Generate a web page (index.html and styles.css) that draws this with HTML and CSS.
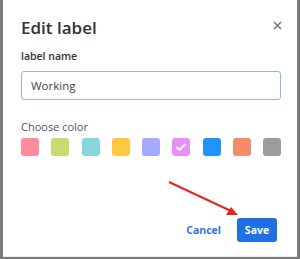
FILE: index.html
```html
<!DOCTYPE html>
<html lang="en">
<head>
    <meta charset="UTF-8">
    <meta name="viewport" content="width=device-width, initial-scale=1.0">
    <title>Edit label</title>
    <link rel="stylesheet" href="styles.css">
</head>
<body>
    <div class="dialog">
        <div class="header">
            <h2 class="title">Edit label</h2>
            <button class="close" aria-label="Close">
                <svg width="9" height="9" viewBox="0 0 9 9">
                    <path d="M1 1 L8 8 M8 1 L1 8" stroke="#777" stroke-width="1.5" fill="none"/>
                </svg>
            </button>
        </div>

        <label class="field-label" for="name">label name</label>
        <input class="field" type="text" id="name" value="Working"/>

        <p class="color-label">Choose color</p>
        <div class="swatches">
            <span class="swatch pink"></span>
            <span class="swatch lime"></span>
            <span class="swatch cyan"></span>
            <span class="swatch yellow"></span>
            <span class="swatch lavender"></span>
            <span class="swatch violet selected">
                <svg width="12" height="10" viewBox="0 0 12 10">
                    <path d="M1.5 5 L4.5 8 L10.5 2" stroke="#fff" stroke-width="1.8" fill="none"/>
                </svg>
            </span>
            <span class="swatch blue"></span>
            <span class="swatch orange"></span>
            <span class="swatch gray"></span>
        </div>

        <div class="actions">
            <button class="btn-cancel">Cancel</button>
            <button class="btn-save">Save</button>
        </div>

        <!-- annotation arrow -->
        <svg class="arrow" width="80" height="40" viewBox="0 0 80 40">
            <line x1="2" y1="2" x2="64" y2="31" stroke="#e8231f" stroke-width="2"/>
            <polygon points="71,35 59,35 64,27" fill="#e8231f"/>
        </svg>
    </div>
</body>
</html>
```

FILE: styles.css
```css
* {
    margin: 0;
    padding: 0;
    box-sizing: border-box;
}
body {
    background-color: #7a7a7a;
    font-family: "Open Sans", "Noto Sans", sans-serif;
    width: 300px;
    height: 259px;
    overflow: hidden;
}
.dialog {
    position: relative;
    background-color: #fff;
    margin: 0 3px;
    height: 257px;
    padding: 15px 16px 0 18px;
    border-bottom: 1px solid #ececec;
}
.header {
    display: flex;
    justify-content: space-between;
    align-items: flex-start;
}
.title {
    font-size: 17px;
    font-weight: 600;
    color: #333;
    line-height: 26px;
}
.close {
    border: none;
    background: none;
    margin-top: 3px;
    margin-right: -1px;
    cursor: pointer;
}
.field-label {
    display: block;
    margin-top: 7px;
    font-size: 10.5px;
    font-weight: 600;
    color: #333;
    line-height: 16px;
}
.field {
    display: block;
    width: 260px;
    height: 29px;
    margin-top: 7px;
    border: 1.5px solid #8db4f5;
    border-radius: 3px;
    padding: 0 9px;
    font-family: inherit;
    font-size: 11.5px;
    color: #444;
    outline: none;
}
.color-label {
    margin-top: 19px;
    font-size: 11px;
    color: #555;
    line-height: 16px;
}
.swatches {
    display: flex;
    justify-content: space-between;
    width: 260px;
    margin-top: 3px;
}
.swatch {
    display: flex;
    justify-content: center;
    align-items: center;
    width: 18px;
    height: 18px;
    border-radius: 3px;
}
.pink { background-color: #ff8b9c; }
.lime { background-color: #c6dc6c; }
.cyan { background-color: #88d5dd; }
.yellow { background-color: #ffc83f; }
.lavender { background-color: #a6aafa; }
.violet { background-color: #e790f8; }
.blue { background-color: #1f93ff; }
.orange { background-color: #f38c6b; }
.gray { background-color: #9c9c9c; }

.actions {
    display: flex;
    justify-content: flex-end;
    align-items: center;
    gap: 16px;
    margin-top: 62px;
    padding-right: 4px;
}
.btn-cancel {
    border: none;
    background: none;
    font-family: inherit;
    font-size: 10.5px;
    font-weight: 700;
    color: #2f73dc;
    cursor: pointer;
}
.btn-save {
    border: none;
    background-color: #1f6fe5;
    color: #fff;
    font-family: inherit;
    font-size: 10.5px;
    font-weight: 700;
    width: 40px;
    height: 24px;
    border-radius: 3px;
    cursor: pointer;
}
.arrow {
    position: absolute;
    left: 164px;
    top: 180px;
}
```
